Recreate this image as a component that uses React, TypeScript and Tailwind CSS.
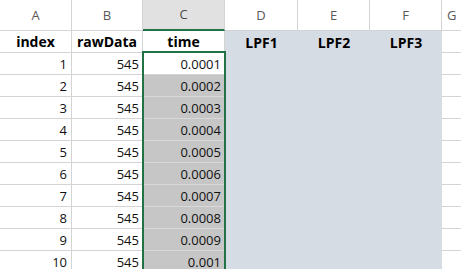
import React from "react";

const cols = [
  { letter: "A", w: 72 },
  { letter: "B", w: 71 },
  { letter: "C", w: 82 },
  { letter: "D", w: 73 },
  { letter: "E", w: 72 },
  { letter: "F", w: 72 },
  { letter: "G", w: 0 },
];

const times = ["0.0001", "0.0002", "0.0003", "0.0004", "0.0005", "0.0006", "0.0007", "0.0008", "0.0009", "0.001"];

export default function App() {
  const font = { fontFamily: '"Open Sans", "Liberation Sans", sans-serif' };
  return (
    <div className="relative w-[461px] h-[269px] overflow-hidden bg-white text-black" style={font}>
      {/* column letters */}
      <div className="flex h-[31px]">
        {cols.map((c, i) => (
          <div
            key={c.letter}
            className={
              i === 2
                ? "flex items-center justify-center border-r border-r-[#d4d4d4] border-b-2 border-b-[#217346] bg-[#e1e1e1] text-[13px] text-[#4a4a4a] pt-[1px] shrink-0"
                : i === 6
                ? "flex flex-1 items-center justify-start border-b border-b-[#d4d4d4] text-[13px] text-[#595959] pt-[1px] pl-[5px]"
                : "flex items-center justify-center border-r border-r-[#d4d4d4] border-b border-b-[#d4d4d4] text-[13px] text-[#595959] pt-[1px] shrink-0"
            }
            style={c.w ? { width: c.w } : undefined}
          >
            {c.letter}
          </div>
        ))}
      </div>

      {/* header row */}
      <div className="flex h-[22px]">
        <div className="w-[72px] shrink-0 flex items-end justify-center pb-[1px] border-r border-b border-[#d4d4d4] text-[14px] font-bold leading-[19px]">index</div>
        <div className="w-[71px] shrink-0 flex items-end justify-center pb-[1px] border-r border-b border-[#d4d4d4] text-[14px] font-bold leading-[19px]">rawData</div>
        <div className="w-[82px] shrink-0 flex items-end justify-center pb-[1px] border-r border-b border-[#d4d4d4] text-[14px] font-bold leading-[19px]">time</div>
        <div className="w-[73px] shrink-0 flex items-end justify-center pb-[1px] bg-[#d6dce4] text-[14px] font-bold leading-[19px]">LPF1</div>
        <div className="w-[72px] shrink-0 flex items-end justify-center pb-[1px] bg-[#d6dce4] text-[14px] font-bold leading-[19px]">LPF2</div>
        <div className="w-[72px] shrink-0 flex items-end justify-center pb-[1px] bg-[#d6dce4] text-[14px] font-bold leading-[19px]">LPF3</div>
        <div className="flex-1 border-b border-[#d4d4d4]" />
      </div>

      {times.map((t, i) => (
        <div key={t} className="flex h-[22px]">
          <div className="w-[72px] shrink-0 flex items-end justify-end pr-[4px] pb-[1px] border-r border-b border-[#d4d4d4] text-[13px] leading-[18px] text-[#111]">{i + 1}</div>
          <div className="w-[71px] shrink-0 flex items-end justify-end pr-[3px] pb-[1px] border-r border-b border-[#d4d4d4] text-[13px] leading-[18px] text-[#111]">545</div>
          <div
            className={
              i === 0
                ? "w-[82px] shrink-0 flex items-end justify-end pr-[4px] pb-[1px] border-b border-[#d4d4d4] bg-white text-[13px] leading-[18px] text-[#111]"
                : "w-[82px] shrink-0 flex items-end justify-end pr-[4px] pb-[1px] border-b border-[#d9d9d9] bg-[#c6c6c6] text-[13px] leading-[18px] text-[#111]"
            }
          >
            {t}
          </div>
          <div className="w-[217px] shrink-0 bg-[#d6dce4]" />
          <div className="flex-1 border-b border-[#d4d4d4]" />
        </div>
      ))}

      {/* selection border overlay */}
      <div className="absolute left-[142px] top-[51px] w-[84px] h-[240px] border-2 border-[#217346] pointer-events-none" />
    </div>
  );
}
